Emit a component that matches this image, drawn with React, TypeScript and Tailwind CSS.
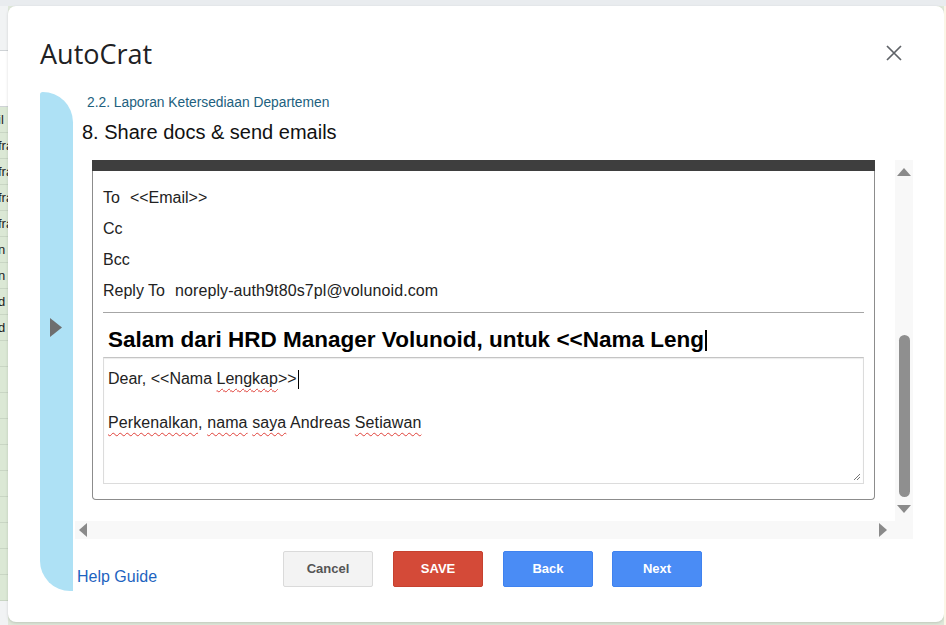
import React from "react"

const sheetCells = ["il", "fra", "fra", "fra", "fra", "n", "n", "d", "d", "", "", "", "", "", "", "", "", "", ""]

function Spell({ children }: { children: React.ReactNode }) {
  return (
    <span className="underline decoration-wavy decoration-[#e0413a] decoration-1 underline-offset-[4px]">{children}</span>
  )
}

function Triangle({ dir, className }: { dir: "up" | "down" | "left" | "right"; className?: string }) {
  const pts = {
    up: "0,8 7,0 14,8",
    down: "0,0 14,0 7,8",
    left: "8,0 8,14 0,7",
    right: "0,0 8,7 0,14",
  }[dir]
  const vertical = dir === "up" || dir === "down"
  return (
    <svg
      width={vertical ? 14 : 8}
      height={vertical ? 8 : 14}
      viewBox={vertical ? "0 0 14 8" : "0 0 8 14"}
      className={className}
      aria-hidden
    >
      <polygon points={pts} fill="#8a8a8a" />
    </svg>
  )
}

export default function App() {
  return (
    <main className="flex h-[625px] w-[946px] flex-col overflow-hidden bg-[#dfe8da] font-['Liberation_Sans',Arial,sans-serif]">
      <div className="h-[6px] w-full shrink-0 bg-[#e9ecef]" />
      <div className="flex flex-1">
        {/* spreadsheet peeking behind the dialog */}
        <div className="flex w-[8px] shrink-0 flex-col overflow-hidden bg-[#f1f3f4]">
          <div className="h-[45px] border-b border-[#cfd3d6]" />
          <div className="h-[56px] border-b border-[#cfd3d6] bg-white" />
          {sheetCells.map((c, i) => (
            <div
              key={i}
              className="flex h-[26px] items-center overflow-hidden whitespace-nowrap border-b border-[#c9d6c4] bg-[#dbe8d5] text-[13px] leading-none text-[#222]"
            >
              {c && <span className="-ml-[2px]">{c}</span>}
            </div>
          ))}
        </div>

        <section className="flex h-[616px] w-[936px] shrink-0 flex-col rounded-lg bg-white shadow-[0_1px_3px_rgba(0,0,0,0.15)]">
          <header className="flex h-[86px] shrink-0 items-center justify-between pl-[32px] pr-[41px] pt-[8px]">
            <h1 className="font-['Open_Sans',sans-serif] text-[27px] leading-none text-[#202124]">AutoCrat</h1>
            <button aria-label="Close" className="flex h-[18px] w-[18px] items-center justify-center">
              <svg width="16" height="16" viewBox="0 0 16 16" aria-hidden>
                <path d="M1 1 L15 15 M15 1 L1 15" stroke="#5f6368" strokeWidth="1.7" />
              </svg>
            </button>
          </header>

          <div className="flex pl-[32px]">
            <div className="flex h-[499px] w-[33px] shrink-0 flex-col rounded-tl-[3px] rounded-tr-[33px] rounded-bl-[33px] bg-[#aee1f5] pl-[10px] pt-[226px]">
              <svg width="12" height="19" viewBox="0 0 12 19" aria-hidden>
                <polygon points="0,0 12,9.5 0,19" fill="#6e6e6e" />
              </svg>
            </div>

            <div className="ml-[2px] flex w-[838px] flex-col">
              <p className="ml-[12px] mt-[3px] h-[16px] text-[13.8px] leading-[16px] text-[#225f7e]">
                2.2. Laporan Ketersediaan Departemen
              </p>
              <h2 className="ml-[7px] mt-[10px] text-[20px] leading-[22px] text-[#111]">8. Share docs &amp; send emails</h2>

              {/* scroll area */}
              <div className="mt-[17px] grid grid-cols-[820px_18px] grid-rows-[361px_18px]">
                <div className="overflow-hidden pl-[17px]">
                  <div className="w-[783px]">
                    <div className="h-[11px] bg-[#3e3e3e]" />
                    <div className="rounded-b-[4px] border-x border-b border-[#8c8c8c] px-[10px] pb-[15px] pt-[11px] text-[16px] text-[#222]">
                      <div className="flex h-[31px] items-center gap-[10px]">
                        <span>To</span>
                        <span>&lt;&lt;Email&gt;&gt;</span>
                      </div>
                      <div className="flex h-[31px] items-center">Cc</div>
                      <div className="flex h-[31px] items-center">Bcc</div>
                      <div className="flex h-[32px] items-center gap-[10px]">
                        <span>Reply To</span>
                        <span className="tracking-[0.1px]">noreply-auth9t80s7pl@volunoid.com</span>
                      </div>
                      <div className="mt-[5px] border-t border-[#a6a6a6]" />
                      <div className="flex h-[44px] pl-[5px] pt-[14px]">
                        <div className="flex h-[26px] items-center whitespace-nowrap text-[22.5px] font-bold leading-[26px] text-black">
                          Salam dari HRD Manager Volunoid, untuk &lt;&lt;Nama Leng
                          <span className="ml-[1px] h-[21px] w-[2px] bg-black" />
                        </div>
                      </div>
                      <div className="relative h-[127px] border border-[#dcdcdc] border-t-[#c4c4c4] pl-[4px] pt-[10px] text-[16px] leading-[22px] text-[#222] shadow-[inset_0_1px_1px_rgba(0,0,0,0.08)]">
                        <p className="flex items-center">
                          Dear, &lt;&lt;Nama&nbsp;<Spell>Lengkap</Spell>&gt;&gt;
                          <span className="ml-[1px] h-[19px] w-px bg-black" />
                        </p>
                        <p className="h-[22px]" />
                        <p className="tracking-[0.1px]">
                          <Spell>Perkenalkan</Spell>, <Spell>nama</Spell> <Spell>saya</Spell> Andreas <Spell>Setiawan</Spell>
                        </p>
                        <svg width="8" height="8" viewBox="0 0 8 8" className="absolute bottom-[2px] right-[2px]" aria-hidden>
                          <path d="M1 7 L7 1 M4 7 L7 4" stroke="#777" strokeWidth="1" />
                        </svg>
                      </div>
                    </div>
                  </div>
                </div>

                {/* vertical scrollbar */}
                <div className="flex flex-col items-center bg-[#f8f8f8]">
                  <div className="flex h-[24px] items-center">
                    <Triangle dir="up" />
                  </div>
                  <div className="h-[151px]" />
                  <div className="h-[162px] w-[11px] rounded-full bg-[#8f8f8f]" />
                  <div className="flex h-[24px] items-center">
                    <Triangle dir="down" />
                  </div>
                </div>

                {/* horizontal scrollbar */}
                <div className="col-span-2 flex items-center justify-between bg-[#f8f8f8] pl-[4px] pr-[26px]">
                  <Triangle dir="left" />
                  <Triangle dir="right" />
                </div>
              </div>

              <footer className="mt-[12px] flex pl-[2px]">
                <a href="#" className="mt-[17px] w-[206px] text-[16px] leading-[18px] text-[#1d63c0]">
                  Help Guide
                </a>
                <div className="flex gap-[20px] text-[13px] font-bold">
                  <button className="h-[36px] w-[90px] rounded-[2px] border border-[#dadada] bg-[#f3f3f3] text-[#555]">
                    Cancel
                  </button>
                  <button className="h-[36px] w-[90px] rounded-[2px] border border-[#c6412f] bg-[#d44a38] text-white">
                    SAVE
                  </button>
                  <button className="h-[36px] w-[90px] rounded-[2px] border border-[#3f82ef] bg-[#4a8cf5] text-white">
                    Back
                  </button>
                  <button className="-ml-[1px] h-[36px] w-[90px] rounded-[2px] border border-[#3f82ef] bg-[#4a8cf5] text-white">
                    Next
                  </button>
                </div>
              </footer>
            </div>
          </div>
        </section>

        <div className="w-[2px] shrink-0 bg-[#fbf6e6]" />
      </div>
    </main>
  )
}
